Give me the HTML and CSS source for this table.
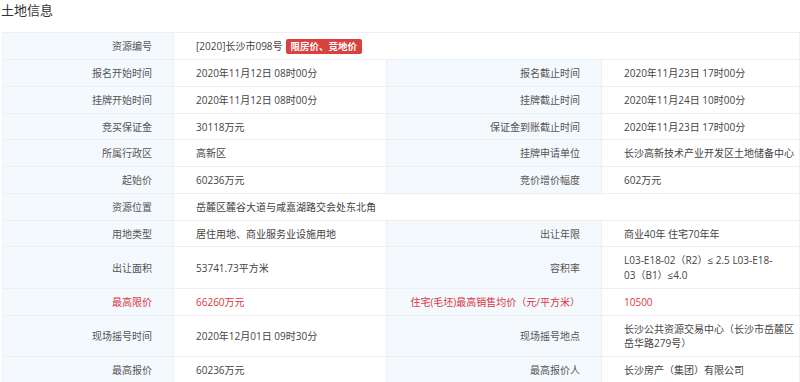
FILE: index.html
```html
<!DOCTYPE html>
<html lang="zh-CN">
<head>
<meta charset="utf-8">
<title>土地信息</title>
<link rel="stylesheet" href="styles.css">
</head>
<body>
<div class="page">
  <div class="title">土地信息</div>
  <div class="grid">
    <div class="lab">资源编号</div>
    <div class="val span3">[2020]长沙市098号<span class="tag">限房价、竞地价</span></div>

    <div class="lab">报名开始时间</div>
    <div class="val">2020年11月12日 08时00分</div>
    <div class="lab">报名截止时间</div>
    <div class="val last">2020年11月23日 17时00分</div>

    <div class="lab">挂牌开始时间</div>
    <div class="val">2020年11月12日 08时00分</div>
    <div class="lab">挂牌截止时间</div>
    <div class="val last">2020年11月24日 10时00分</div>

    <div class="lab">竞买保证金</div>
    <div class="val">30118万元</div>
    <div class="lab">保证金到账截止时间</div>
    <div class="val last">2020年11月23日 17时00分</div>

    <div class="lab">所属行政区</div>
    <div class="val">高新区</div>
    <div class="lab">挂牌申请单位</div>
    <div class="val last">长沙高新技术产业开发区土地储备中心</div>

    <div class="lab">起始价</div>
    <div class="val">60236万元</div>
    <div class="lab">竞价增价幅度</div>
    <div class="val last">602万元</div>

    <div class="lab">资源位置</div>
    <div class="val span3">岳麓区麓谷大道与咸嘉湖路交会处东北角</div>

    <div class="lab">用地类型</div>
    <div class="val">居住用地、商业服务业设施用地</div>
    <div class="lab">出让年限</div>
    <div class="val last">商业40年 住宅70年年</div>

    <div class="lab">出让面积</div>
    <div class="val">53741.73平方米</div>
    <div class="lab">容积率</div>
    <div class="val last"><span>L03-E18-02（R2）≤ 2.5 L03-E18-<br>03（B1）≤4.0</span></div>

    <div class="lab red">最高限价</div>
    <div class="val red">66260万元</div>
    <div class="lab red">住宅(毛坯)最高销售均价（元/平方米）</div>
    <div class="val last red">10500</div>

    <div class="lab">现场摇号时间</div>
    <div class="val">2020年12月01日 09时30分</div>
    <div class="lab">现场摇号地点</div>
    <div class="val last">长沙公共资源交易中心（长沙市岳麓区岳华路279号）</div>

    <div class="lab">最高报价</div>
    <div class="val">60236万元</div>
    <div class="lab">最高报价人</div>
    <div class="val last">长沙房产（集团）有限公司</div>
  </div>
</div>
</body>
</html>
```

FILE: styles.css
```css
html, body {
  margin: 0;
  padding: 0;
  background: #ffffff;
  overflow: hidden;
}
.page {
  width: 800px;
  font-family: "Open Sans", "Noto Sans CJK SC", sans-serif;
  color: #4a4a4a;
}
.title {
  font-family: "Noto Sans CJK SC", sans-serif;
  font-size: 13px;
  line-height: 20px;
  height: 20px;
  padding-left: 1px;
  margin-bottom: 12px;
  color: #333333;
}
.grid {
  margin-left: 2px;
  display: grid;
  grid-template-columns: 171px 213px 215px 1fr;
  border-top: 1px solid #edf0f3;
  border-left: 1px solid #edf0f3;
  font-size: 10px;
  line-height: 14.75px;
}
.lab, .val {
  display: flex;
  align-items: center;
  padding: 6px 0 5px;
  border-right: 1px solid #edf0f3;
  border-bottom: 1px solid #edf0f3;
}
.lab {
  background: #f4f9fe;
  justify-content: flex-end;
  text-align: right;
  padding-right: 21px;
  padding-left: 10px;
  color: #555555;
}
.val {
  background: #ffffff;
  padding-left: 22px;
  padding-right: 8px;
  color: #444444;
}
.val.last {
  padding-right: 4px;
}
.span3 {
  grid-column: span 3;
}
.red {
  color: #d9363e;
}
.tag {
  display: inline-block;
  margin-left: 3px;
  padding: 0 5px;
  height: 15px;
  line-height: 15px;
  font-family: "Noto Sans CJK SC", sans-serif;
  font-size: 9.5px;
  font-weight: bold;
  color: #ffffff;
  background: #d9413f;
  border-radius: 2px;
}
```
